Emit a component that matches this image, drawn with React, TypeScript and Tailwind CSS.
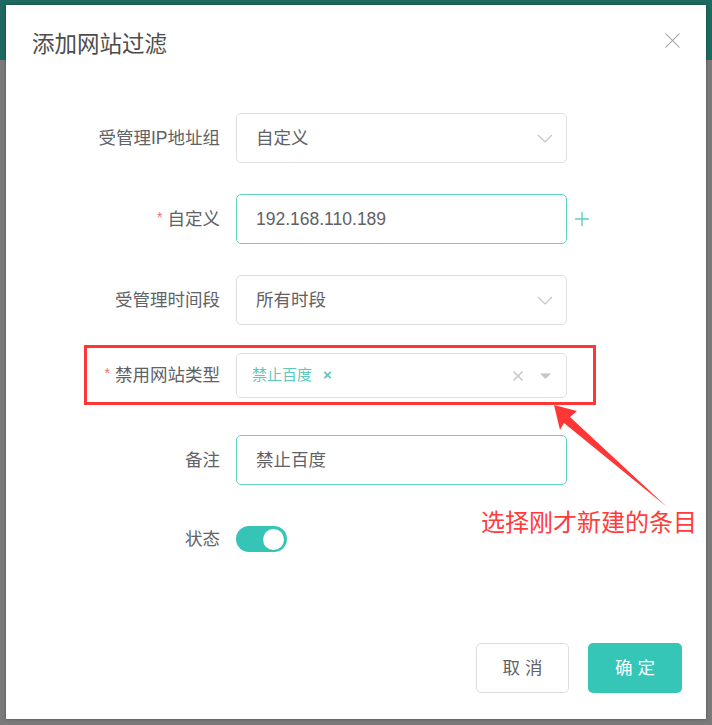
import { X } from 'lucide-react';

const font = 'font-["Liberation_Sans","Noto_Sans_CJK_SC",sans-serif]';

function Label({ text, required }: { text: string; required?: boolean }) {
  return (
    <div className="w-[214px] shrink-0 flex items-center justify-end text-[17.5px] text-[#606266]">
      {required && <span className="text-[#f56c6c] text-[14px] mr-[5px] -mt-[4px]">*</span>}
      <span>{text}</span>
    </div>
  );
}

function Chevron() {
  return (
    <svg width="16" height="9" viewBox="0 0 16 9" fill="none">
      <path d="M1 1 L8 8 L15 1" stroke="#c0c4cc" strokeWidth="1.2" />
    </svg>
  );
}

function Select({ value }: { value: string }) {
  return (
    <div className="w-[331px] h-[50px] border border-[#dcdfe6] rounded-[5px] flex items-center justify-between pl-[19px] pr-[13px] text-[17.5px] text-[#606266]">
      <span>{value}</span>
      <Chevron />
    </div>
  );
}

export default function App() {
  return (
    <div className={`relative w-[712px] h-[725px] overflow-hidden ${font}`}>
      <div className="h-[60px] bg-[#1e6a60]" />
      <div className="h-[665px] bg-[#7a7a7a]" />

      {/* dialog */}
      <div className="absolute left-[6px] top-[5px] w-[700px] h-[714px] bg-white flex flex-col shadow-[0_0_3px_rgba(0,0,0,0.35)]">
        <div className="flex items-start justify-between pl-[26px] pr-[20px] pt-[25px]">
          <h2 className="text-[22.5px] leading-[30px] text-[#4d4d4d]">添加网站过滤</h2>
          <X size={27} strokeWidth={0.9} className="text-[#909399] -mt-[3px]" />
        </div>

        <div className="mt-[53px] flex flex-col">
          <div className="flex items-center gap-[16px]">
            <Label text="受管理IP地址组" />
            <Select value="自定义" />
          </div>

          <div className="flex items-center gap-[16px] mt-[31px]">
            <Label text="自定义" required />
            <div className="w-[331px] h-[50px] border border-[#5fd3c6] rounded-[5px] flex items-center pl-[19px] text-[17.5px] text-[#606266]">
              192.168.110.189
            </div>
            <svg width="16" height="16" viewBox="0 0 16 16" className="-ml-[9px]">
              <path d="M8 1 V15 M1 8 H15" stroke="#5ccfc2" strokeWidth="1.4" />
            </svg>
          </div>

          <div className="flex items-center gap-[16px] mt-[31px]">
            <Label text="受管理时间段" />
            <Select value="所有时段" />
          </div>

          <div className="flex items-center gap-[16px] mt-[28px]">
            <Label text="禁用网站类型" required />
            <div className="w-[331px] h-[45px] border border-[#dcdfe6] rounded-[5px] flex items-center justify-between pl-[15px] pr-[14px]">
              <div className="flex items-center gap-[11px] text-[15px] text-[#5cc8bb]">
                <span>禁止百度</span>
                <span className="text-[15px] font-bold">×</span>
              </div>
              <div className="flex items-center gap-[13px]">
                <X size={16} strokeWidth={2.6} className="text-[#c8cacf]" />
                <svg width="13" height="8" viewBox="0 0 13 8">
                  <path d="M1 1.5 L12 1.5 L6.5 7 Z" fill="#c0c4cc" />
                </svg>
              </div>
            </div>
          </div>

          <div className="flex items-center gap-[16px] mt-[37px]">
            <Label text="备注" />
            <div className="w-[331px] h-[50px] border border-[#5fd3c6] rounded-[5px] flex items-center pl-[19px] text-[17.5px] text-[#606266]">
              禁止百度
            </div>
          </div>

          <div className="flex items-center gap-[16px] mt-[41px]">
            <Label text="状态" />
            <div className="w-[51px] h-[26px] rounded-full bg-[#35c4b5] flex items-center justify-end pr-[3px]">
              <div className="w-[21px] h-[21px] rounded-full bg-white" />
            </div>
          </div>
        </div>

        <div className="mt-auto flex justify-end gap-[19px] pr-[24px] pb-[26px]">
          <button className="w-[93px] h-[50px] border border-[#dcdfe6] rounded-[5px] bg-white text-[17.5px] text-[#606266] tracking-[5px] pl-[5px]">
            取消
          </button>
          <button className="w-[94px] h-[50px] rounded-[5px] bg-[#35c6b7] text-[17.5px] text-white tracking-[5px] pl-[5px]">
            确定
          </button>
        </div>
      </div>

      {/* annotation */}
      <div className="absolute left-[84px] top-[345px] w-[512px] h-[60px] border-[3px] border-[#ff3636]" />
      <svg className="absolute left-0 top-0" width="712" height="725" viewBox="0 0 712 725">
        <polygon points="554,405 577,411 570,417 667,507 564,423 560,430" fill="#ff3636" />
      </svg>
      <div className="absolute left-[481px] top-[505px] text-[24px] leading-[32px] text-[#ff3b3b] font-['Noto_Sans_CJK_SC',sans-serif]">
        选择刚才新建的条目
      </div>
    </div>
  );
}
